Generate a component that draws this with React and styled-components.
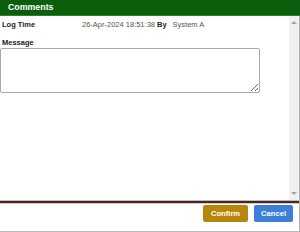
import React from "react";
import styled, { createGlobalStyle } from "styled-components";

const Global = createGlobalStyle`
  html, body {
    margin: 0;
    padding: 0;
    background: #fff;
  }
  body {
    font-family: "Liberation Sans", Arial, sans-serif;
  }
`;

const Panel = styled.div`
  width: 300px;
  height: 232px;
  box-sizing: border-box;
  display: flex;
  flex-direction: column;
  border-right: 1px solid #b4b4b4;
  border-bottom: 1px solid #bdbdbd;
  background: #fff;
`;

const Header = styled.div`
  height: 15px;
  line-height: 15px;
  margin-right: -1px;
  padding-left: 8px;
  background-color: #0b5e0b;
  border-bottom: 1px solid #2f7d2f;
  color: #fff;
  font-weight: bold;
  font-size: 8.8px;
`;

const Body = styled.div`
  flex: 1;
  display: flex;
  min-height: 0;
`;

const Content = styled.div`
  flex: 1;
  padding: 4px 0 0 2px;
`;

const InfoRow = styled.div`
  display: flex;
  align-items: baseline;
  font-size: 7.5px;
  line-height: 9px;
`;

const Label = styled.span`
  font-weight: bold;
  color: #222;
  width: ${(p) => (p.wide ? "80px" : "auto")};
`;

const Value = styled.span`
  color: #555;
`;

const By = styled.span`
  font-weight: bold;
  color: #222;
  margin: 0 6px 0 2px;
`;

const MessageLabel = styled.div`
  margin-top: 9px;
  font-size: 7.5px;
  line-height: 9px;
  font-weight: bold;
  color: #222;
`;

const TextArea = styled.textarea`
  display: block;
  box-sizing: border-box;
  width: 260px;
  height: 45px;
  margin: 1px 0 0 -2px;
  border: 1px solid #a9a9a9;
  border-radius: 2px;
  font-family: inherit;
  font-size: 8px;
`;

const ScrollTrack = styled.div`
  width: 10px;
  background: #f0f0f0;
  display: flex;
  flex-direction: column;
  justify-content: space-between;
  align-items: center;
  padding: 5px 0;
`;

const Arrow = styled.div`
  width: 0;
  height: 0;
  border-left: 3px solid transparent;
  border-right: 3px solid transparent;
  ${(p) =>
    p.down
      ? "border-top: 3px solid #a3a3a3;"
      : "border-bottom: 3px solid #a3a3a3;"}
`;

const Separator = styled.div`
  height: 2px;
  background: #3b2b2b;
  border-top: 1px solid #d6b3b3;
  border-bottom: 1px solid #e2c6c6;
`;

const Footer = styled.div`
  height: 26px;
  display: flex;
  justify-content: flex-end;
  align-items: flex-start;
  gap: 6px;
  padding: 1px 6px 0 0;
`;

const Button = styled.button`
  height: 17px;
  padding: 0 ${(p) => p.pad}px;
  border: none;
  border-radius: 2px;
  background: ${(p) => p.bg};
  color: #fff;
  font-family: inherit;
  font-weight: bold;
  font-size: 7.6px;
`;

export default function App() {
  return (
    <>
      <Global />
      <Panel>
        <Header>Comments</Header>
        <Body>
          <Content>
            <InfoRow>
              <Label wide>Log Time</Label>
              <Value>26-Apr-2024 18:51:38</Value>
              <By>By</By>
              <Value>System A</Value>
            </InfoRow>
            <MessageLabel>Message</MessageLabel>
            <TextArea />
          </Content>
          <ScrollTrack>
            <Arrow />
            <Arrow down />
          </ScrollTrack>
        </Body>
        <Separator />
        <Footer>
          <Button bg="#b8860b" pad={8}>Confirm</Button>
          <Button bg="#3b7fd9" pad={7}>Cancel</Button>
        </Footer>
      </Panel>
    </>
  );
}
